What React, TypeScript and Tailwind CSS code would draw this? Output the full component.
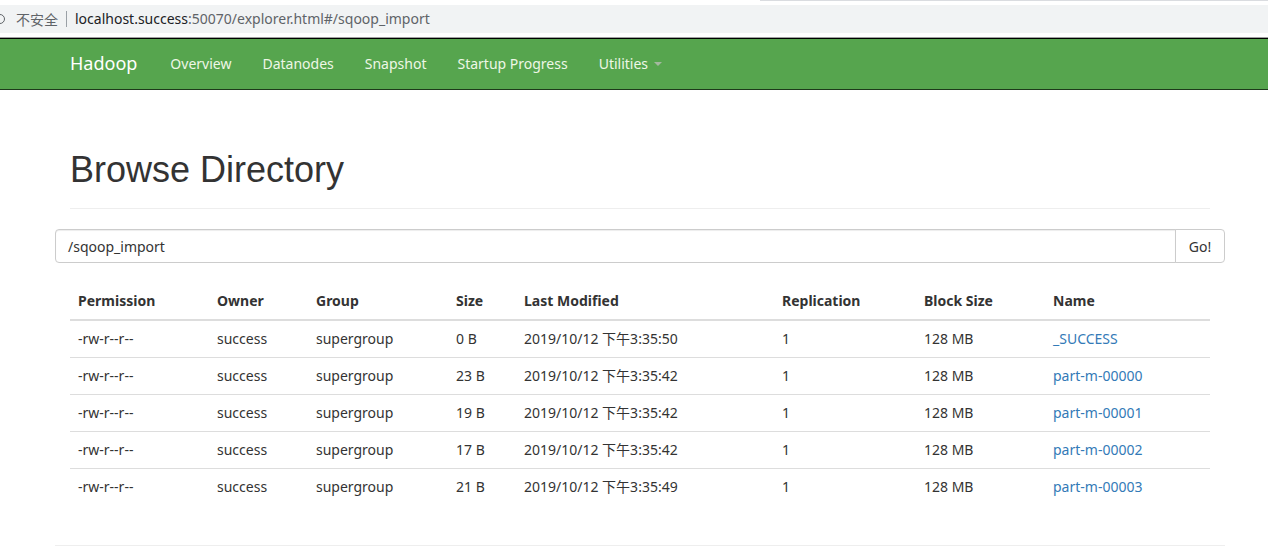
const rows = [
  { size: "0 B", time: "2019/10/12 下午3:35:50", name: "_SUCCESS" },
  { size: "23 B", time: "2019/10/12 下午3:35:42", name: "part-m-00000" },
  { size: "19 B", time: "2019/10/12 下午3:35:42", name: "part-m-00001" },
  { size: "17 B", time: "2019/10/12 下午3:35:42", name: "part-m-00002" },
  { size: "21 B", time: "2019/10/12 下午3:35:49", name: "part-m-00003" },
];

const cols = [
  { label: "Permission", w: "w-[139px]" },
  { label: "Owner", w: "w-[99px]" },
  { label: "Group", w: "w-[140px]" },
  { label: "Size", w: "w-[68px]" },
  { label: "Last Modified", w: "w-[258px]" },
  { label: "Replication", w: "w-[142px]" },
  { label: "Block Size", w: "w-[129px]" },
  { label: "Name", w: "w-[165px]" },
];

const navLinks = ["Overview", "Datanodes", "Snapshot", "Startup Progress"];

export default function App() {
  return (
    <div className="w-[1268px] h-[560px] overflow-hidden bg-white font-['Noto_Sans','Noto_Sans_CJK_SC',sans-serif] text-[#333]">
      {/* browser chrome */}
      <div className="h-[5px] flex">
        <div className="ml-[760px] flex-1 h-[1px] bg-[#dadce0]" />
      </div>
      <div className="h-[28px] bg-[#f1f3f4] flex items-center text-[14px] leading-none">
        <span className="w-[10px] h-[10px] -ml-[5px] rounded-full border-[1.5px] border-[#5f6368]" />
        <span className="ml-[11px] text-[#5f6368] font-['Noto_Sans_CJK_SC',sans-serif]">不安全</span>
        <span className="ml-[8px] w-px h-[16px] bg-[#9aa0a6]" />
        <span className="ml-[8px] text-[#202124]">localhost.success</span>
        <span className="text-[#5f6368]">:50070/explorer.html#/sqoop_import</span>
      </div>
      <div className="h-[4px] bg-white" />
      <div className="h-px bg-[#a0a0a0]" />
      <div className="h-px bg-black" />

      {/* navbar */}
      <nav className="h-[51px] bg-[#56a54e] border-b border-[#1e3a1b] flex items-center pl-[70px] pb-[2px]">
        <span className="text-white text-[18px] mr-[33px]">Hadoop</span>
        {navLinks.map((l) => (
          <span key={l} className="text-[#eef7e6] text-[14px] mr-[31px]">
            {l}
          </span>
        ))}
        <span className="text-[#eef7e6] text-[14px] flex items-center">
          Utilities
          <span className="ml-[6px] w-0 h-0 border-x-[4px] border-x-transparent border-t-[4px] border-t-[#a4b89f] mt-[2px]" />
        </span>
      </nav>

      <div className="pl-[55px] w-[1225px]">
        <div className="px-[15px]">
          <h1 className="font-['Liberation_Sans',sans-serif] text-[36px] leading-[40px] pt-[60px] pb-[18px] border-b border-[#eee]">
            Browse Directory
          </h1>
        </div>

        <div className="mt-[20px] flex h-[34px] text-[14px]">
          <div className="flex-1 border border-[#ccc] rounded-l-[4px] flex items-center px-[12px] shadow-[inset_0_1px_1px_rgba(0,0,0,0.075)]">
            /sqoop_import
          </div>
          <div className="w-[50px] border border-[#ccc] rounded-r-[4px] flex items-center justify-center -ml-px">
            Go!
          </div>
        </div>

        <div className="px-[15px] mt-[20px]">
          <table className="w-[1140px] table-fixed border-collapse text-[14px]">
            <thead>
              <tr className="border-b-2 border-[#ddd]">
                {cols.map((c) => (
                  <th key={c.label} className={`${c.w} text-left font-bold px-[8px] py-[8px] leading-[20px]`}>
                    {c.label}
                  </th>
                ))}
              </tr>
            </thead>
            <tbody>
              {rows.map((r, i) => (
                <tr key={r.name} className={i > 0 ? "border-t border-[#ddd]" : ""}>
                  <td className="px-[8px] py-[8px] leading-[20px]">-rw-r--r--</td>
                  <td className="px-[8px] py-[8px] leading-[20px]">success</td>
                  <td className="px-[8px] py-[8px] leading-[20px]">supergroup</td>
                  <td className="px-[8px] py-[8px] leading-[20px]">{r.size}</td>
                  <td className="px-[8px] py-[8px] leading-[20px]">{r.time}</td>
                  <td className="px-[8px] py-[8px] leading-[20px]">1</td>
                  <td className="px-[8px] py-[8px] leading-[20px]">128 MB</td>
                  <td className="px-[8px] py-[8px] leading-[20px] text-[#337ab7]">{r.name}</td>
                </tr>
              ))}
            </tbody>
          </table>
        </div>

        <div className="mt-[40px] border-t border-[#eee]" />
      </div>
    </div>
  );
}
